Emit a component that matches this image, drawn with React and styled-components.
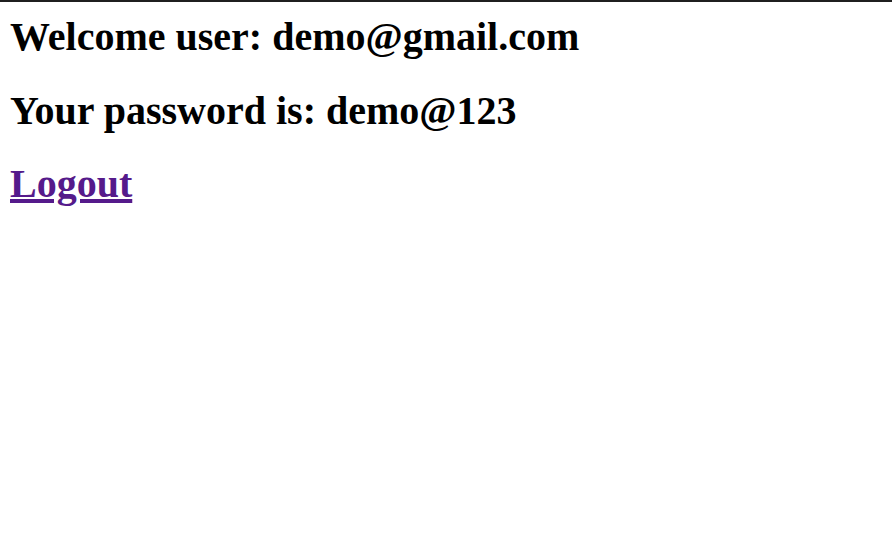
import React from 'react';
import styled, { createGlobalStyle } from 'styled-components';

const GlobalStyle = createGlobalStyle`
  html, body {
    margin: 0;
    padding: 0;
    background: #fff;
  }
`;

const Page = styled.div`
  border-top: 2px solid #1f1f1f;
  padding: 12px 10px 0;
  display: flex;
  flex-direction: column;
  align-items: flex-start;
  gap: 27.5px;
  font-family: "Liberation Serif", "Times New Roman", serif;
  color: #000;
`;

const Heading = styled.h1`
  margin: 0;
  font-size: 40px;
  line-height: 46px;
  font-weight: bold;
`;

const LogoutLink = styled.a`
  color: #551a8b;
  text-decoration: underline;
  cursor: pointer;
`;

export default function App() {
  return (
    <>
      <GlobalStyle />
      <Page>
        <Heading>Welcome user: demo@gmail.com</Heading>
        <Heading>Your password is: demo@123</Heading>
        <Heading>
          <LogoutLink href="#">Logout</LogoutLink>
        </Heading>
      </Page>
    </>
  );
}
